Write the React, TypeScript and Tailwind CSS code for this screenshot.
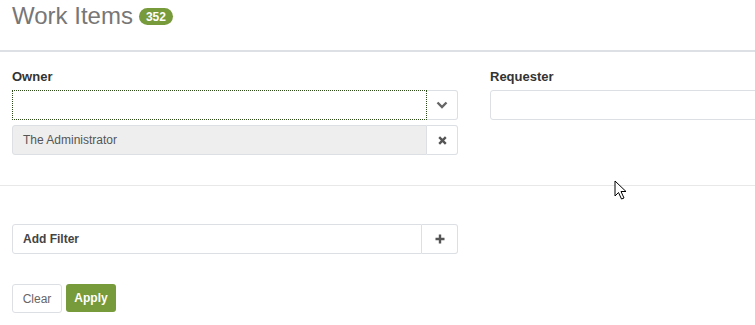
import React from 'react';

const ChevronDown = () => (
    <svg width="12" height="8" viewBox="0 0 12 8">
        <path d="M1.5 1.5 L6 6 L10.5 1.5" fill="none" stroke="#666" strokeWidth="2.4" />
    </svg>
);

const Times = () => (
    <svg width="9" height="9" viewBox="0 0 9 9">
        <path d="M1.2 1.2 L7.8 7.8 M7.8 1.2 L1.2 7.8" fill="none" stroke="#555" strokeWidth="2.4" />
    </svg>
);

const Plus = () => (
    <svg width="10" height="10" viewBox="0 0 10 10">
        <path d="M5 0.5 V9.5 M0.5 5 H9.5" fill="none" stroke="#555" strokeWidth="2.4" />
    </svg>
);

const Cursor = () => (
    <svg width="14" height="21" viewBox="0 0 14 21" className="absolute left-[614px] top-[180px]">
        <path d="M1 1 V16 L4.5 12.5 L7.5 19 L10 18 L7 11.5 H12 Z" fill="#fff" stroke="#000" strokeWidth="1" strokeLinejoin="round" />
    </svg>
);

export default function App() {
    return (
        <div className="relative w-[755px] h-[325px] overflow-hidden bg-white font-['Liberation_Sans',Arial,sans-serif]">
            <div className="flex items-center h-[31px] px-3">
                <h1 className="text-[24px] leading-none text-[#777] font-normal">Work Items</h1>
                <span className="ml-[6px] mt-[2px] px-[7px] h-[17px] flex items-center rounded-full bg-[#779a3a] text-white text-[12px] font-bold">352</span>
            </div>
            <div className="mt-[19px] h-[2px] bg-[#dde0e4]" />

            <div className="flex pt-[17px] pb-[30px] px-3 gap-8">
                <div className="w-[446px] flex flex-col">
                    <label className="text-[13px] font-bold text-[#333] leading-[15px] mb-[6px]">Owner</label>
                    <div className="flex h-[30px]">
                        <div className="flex-1 border border-dotted border-[#2d4a1a] bg-white" />
                        <button className="w-[31px] flex items-center justify-center border border-[#dcdfe4] border-l-0 rounded-r-[3px] bg-white">
                            <ChevronDown />
                        </button>
                    </div>
                    <div className="flex h-[30px] mt-[5px]">
                        <div className="flex-1 flex items-center px-[10px] bg-[#eeeeee] border border-[#dcdfe4] rounded-l-[3px] text-[12px] text-[#555]">
                            The Administrator
                        </div>
                        <button className="w-[31px] flex items-center justify-center border border-[#dcdfe4] border-l-0 rounded-r-[3px] bg-white">
                            <Times />
                        </button>
                    </div>
                </div>
                <div className="flex-1 flex flex-col">
                    <label className="text-[13px] font-bold text-[#333] leading-[15px] mb-[6px]">Requester</label>
                    <div className="h-[30px] -mr-6 border border-[#dcdfe4] rounded-[3px] bg-white" />
                </div>
            </div>

            <div className="h-px bg-[#e8e8e8]" />

            <div className="px-3 pt-[38px]">
                <div className="flex w-[446px] h-[30px]">
                    <div className="flex-1 flex items-center px-[10px] border border-[#dcdfe4] rounded-l-[3px] text-[12px] font-bold text-[#444]">
                        Add Filter
                    </div>
                    <button className="w-[36px] flex items-center justify-center border border-[#dcdfe4] border-l-0 rounded-r-[3px] bg-white">
                        <Plus />
                    </button>
                </div>
                <div className="flex gap-[4px] mt-[30px]">
                    <button className="w-[50px] h-[29px] border border-[#dcdfe4] rounded-[3px] bg-white text-[12px] text-[#666]">Clear</button>
                    <button className="w-[50px] h-[28px] rounded-[3px] bg-[#779a3a] text-[12px] font-bold text-white">Apply</button>
                </div>
            </div>

            <Cursor />
        </div>
    );
}
